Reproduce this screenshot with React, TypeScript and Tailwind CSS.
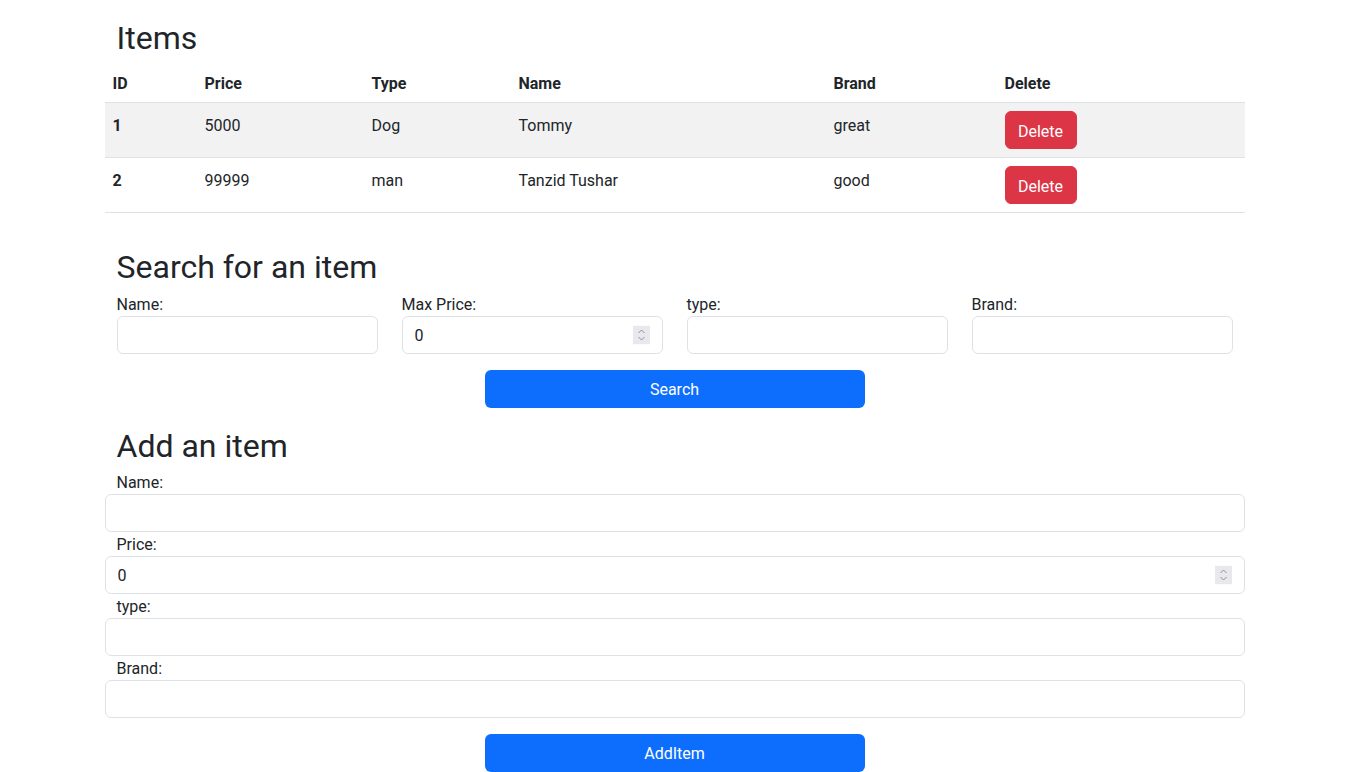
import React from "react";

const font = "font-['Roboto',sans-serif]";

function Spinner() {
  return (
    <svg
      width="17"
      height="19"
      viewBox="0 0 17 19"
      className="pointer-events-none absolute right-[13px] top-1/2 -translate-y-1/2"
    >
      <rect x="0" y="0" width="17" height="19" fill="#e9e9ed" />
      <path d="M5.5 7.5 L8.5 4.5 L11.5 7.5" fill="none" stroke="#8f8f9d" strokeWidth="1" />
      <path d="M5.5 11.5 L8.5 14.5 L11.5 11.5" fill="none" stroke="#8f8f9d" strokeWidth="1" />
    </svg>
  );
}

function TextInput({ value, number }: { value?: string; number?: boolean }) {
  return (
    <div className="relative w-full">
      <input
        type="text"
        defaultValue={value ?? ""}
        className={`${font} block h-[38px] w-full rounded-md border border-[#dee2e6] bg-white px-3 py-1.5 text-base leading-6 text-[#212529] outline-none`}
      />
      {number && <Spinner />}
    </div>
  );
}

const rows = [
  { id: "1", price: "5000", type: "Dog", name: "Tommy", brand: "great" },
  { id: "2", price: "99999", type: "man", name: "Tanzid Tushar", brand: "good" },
];

export default function App() {
  return (
    <div className={`${font} min-h-screen bg-white text-base leading-6 text-[#212529]`}>
      <div className="mx-auto w-[1140px] pt-[19px]">
        <h2 className="mb-[5px] px-3 text-[32px] font-normal leading-[38px]">Items</h2>
        <table className="w-full border-collapse text-left">
          <thead>
            <tr className="border-b border-[#dee2e6]">
              <th className="w-[92px] px-2 pt-[10px] pb-[6px] font-bold">ID</th>
              <th className="w-[167px] px-2 pt-[10px] pb-[6px] font-bold">Price</th>
              <th className="w-[147px] px-2 pt-[10px] pb-[6px] font-bold">Type</th>
              <th className="w-[315px] px-2 pt-[10px] pb-[6px] font-bold">Name</th>
              <th className="w-[171px] px-2 pt-[10px] pb-[6px] font-bold">Brand</th>
              <th className="px-2 pt-[10px] pb-[6px] font-bold">Delete</th>
            </tr>
          </thead>
          <tbody>
            {rows.map((r, i) => (
              <tr
                key={r.id}
                className={`border-b border-[#dee2e6] ${i === 0 ? "bg-[#f2f2f2]" : "bg-white"}`}
              >
                <td className="px-2 pt-[11px] pb-[5px] align-top font-bold">{r.id}</td>
                <td className="px-2 pt-[11px] pb-[5px] align-top">{r.price}</td>
                <td className="px-2 pt-[11px] pb-[5px] align-top">{r.type}</td>
                <td className="px-2 pt-[11px] pb-[5px] align-top">{r.name}</td>
                <td className="px-2 pt-[11px] pb-[5px] align-top">{r.brand}</td>
                <td className="px-2 py-2 align-top">
                  <button className="h-[38px] w-[72px] rounded-md border border-[#dc3545] bg-[#dc3545] pt-[3px] text-base leading-6 text-white">
                    Delete
                  </button>
                </td>
              </tr>
            ))}
          </tbody>
        </table>

        <h2 className="mt-[30px] mb-[6px] px-3 pt-[5px] text-[32px] font-normal leading-[38px]">
          Search for an item
        </h2>
        <div className="grid grid-cols-4">
          {[
            { label: "Name:" },
            { label: "Max Price:", value: "0", number: true },
            { label: "type:" },
            { label: "Brand:" },
          ].map((f) => (
            <div key={f.label} className="px-3">
              <label className="block pt-[2px] leading-[22px]">{f.label}</label>
              <TextInput value={f.value} number={f.number} />
            </div>
          ))}
        </div>
        <div className="mt-4 flex justify-center">
          <button className="h-[38px] w-[380px] rounded-md bg-[#0d6efd] pt-[2px] text-base leading-6 text-white">
            Search
          </button>
        </div>

        <h2 className="mt-[15px] mb-[5px] px-3 pt-[4px] text-[32px] font-normal leading-[38px]">
          Add an item
        </h2>
        <div className="flex flex-col">
          {[
            { label: "Name:" },
            { label: "Price:", value: "0", number: true },
            { label: "type:" },
            { label: "Brand:" },
          ].map((f) => (
            <div key={f.label}>
              <label className="block px-3 pt-[2px] leading-[22px]">{f.label}</label>
              <TextInput value={f.value} number={f.number} />
            </div>
          ))}
        </div>
        <div className="mt-4 flex justify-center">
          <button className="h-[38px] w-[380px] rounded-md bg-[#0d6efd] pt-[2px] text-base leading-6 text-white">
            AddItem
          </button>
        </div>
      </div>
    </div>
  );
}
